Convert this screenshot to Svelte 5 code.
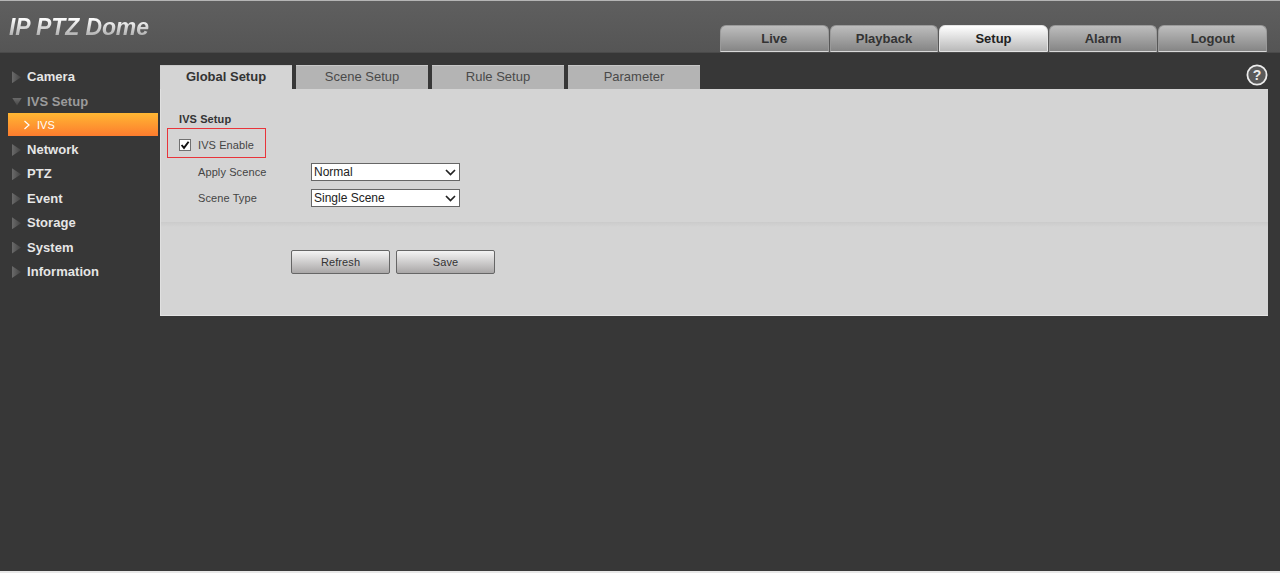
<script>
  const topTabs = ['Live', 'Playback', 'Setup', 'Alarm', 'Logout'];
  const subTabs = ['Global Setup', 'Scene Setup', 'Rule Setup', 'Parameter'];
  const menuAfter = ['Network', 'PTZ', 'Event', 'Storage', 'System', 'Information'];
</script>

<div class="page">
  <header class="header">
    <div class="logo">IP PTZ Dome</div>
    <nav class="top-tabs">
      {#each topTabs as tab}
        <a class="top-tab" class:active={tab === 'Setup'}>{tab}</a>
      {/each}
    </nav>
  </header>

  <div class="body">
    <aside class="side">
      <div class="menu-item"><span class="arrow"></span>Camera</div>
      <div class="menu-item open"><span class="arrow down"></span>IVS Setup</div>
      <div class="sub-item">
        <svg width="8" height="10" viewBox="0 0 8 10"><path d="M1.5 1 L6 5 L1.5 9" fill="none" stroke="#fff" stroke-width="1.2" /></svg>
        IVS
      </div>
      {#each menuAfter as item}
        <div class="menu-item"><span class="arrow"></span>{item}</div>
      {/each}
    </aside>

    <main class="main">
      <div class="sub-bar">
        <div class="sub-tabs">
          {#each subTabs as tab, i}
            <a class="sub-tab" class:active={i === 0}>{tab}</a>
          {/each}
        </div>
        <svg class="help" width="22" height="22" viewBox="0 0 22 22">
          <circle cx="11" cy="11" r="9.6" fill="#5a5a5a" stroke="#ececec" stroke-width="1.8" />
          <text x="11" y="16" text-anchor="middle" font-family="Liberation Sans" font-weight="700" font-size="14" fill="#ececec">?</text>
        </svg>
      </div>

      <section class="panel">
        <div class="form">
          <h3 class="title">IVS Setup</h3>
          <label class="enable">
            <span class="check">
              <input type="checkbox" checked />
              <svg width="12" height="12" viewBox="0 0 12 12"><path d="M2.6 6 L5 8.9 L9.6 2.8" fill="none" stroke="#111" stroke-width="1.9" /></svg>
            </span>
            <span>IVS Enable</span>
          </label>
          <div class="row">
            <span class="row-label">Apply Scence</span>
            <span class="select-wrap">
              <select><option>Normal</option></select>
              <svg width="11" height="7" viewBox="0 0 11 7"><path d="M1 1 L5.5 5.5 L10 1" fill="none" stroke="#222" stroke-width="1.7" /></svg>
            </span>
          </div>
          <div class="row">
            <span class="row-label">Scene Type</span>
            <span class="select-wrap">
              <select><option>Single Scene</option></select>
              <svg width="11" height="7" viewBox="0 0 11 7"><path d="M1 1 L5.5 5.5 L10 1" fill="none" stroke="#222" stroke-width="1.7" /></svg>
            </span>
          </div>
        </div>
        <div class="divider"></div>
        <div class="actions">
          <button>Refresh</button>
          <button>Save</button>
        </div>
      </section>
    </main>
  </div>
</div>

<style>
  :global(body) {
    margin: 0;
    background: #373737;
  }

  .page {
    height: 573px;
    box-sizing: border-box;
    border-top: 1px solid #b5b5b5;
    border-bottom: 2px solid #e8e8e8;
    background: #373737;
    font-family: "Liberation Sans", Arial, sans-serif;
    overflow: hidden;
  }

  .header {
    height: 51px;
    display: flex;
    justify-content: space-between;
    align-items: flex-end;
    background: linear-gradient(#5f5f5f, #555);
    border-bottom: 1px solid #4a4a4a;
    padding: 0 13px 0 9px;
  }

  .logo {
    align-self: flex-start;
    margin-top: 11px;
    font-size: 23px;
    line-height: 30px;
    font-weight: 700;
    font-style: italic;
    letter-spacing: -0.1px;
    background: linear-gradient(#fbfbfb 25%, #aeaeae 80%);
    -webkit-background-clip: text;
    background-clip: text;
    color: transparent;
  }

  .top-tabs {
    display: flex;
    gap: 1px;
  }

  .top-tab {
    width: 108.6px;
    height: 27px;
    line-height: 25px;
    box-sizing: border-box;
    text-align: center;
    font-size: 13px;
    font-weight: 700;
    color: #333;
    border: 1px solid #9a9a9a;
    border-bottom-color: #d8d8d8;
    border-radius: 6px 6px 0 0;
    background: linear-gradient(#bdbdbd, #858585);
  }

  .top-tab.active {
    background: linear-gradient(#fff, #b9b9b9);
    border-color: #e4e4e4;
    color: #222;
  }

  .body {
    display: flex;
  }

  .side {
    width: 160px;
    flex: none;
    padding-top: 12px;
  }

  .menu-item {
    height: 24.4px;
    line-height: 24px;
    display: flex;
    align-items: center;
    padding-left: 12px;
    font-size: 13px;
    font-weight: 700;
    letter-spacing: 0.05px;
    color: #e6e6e6;
  }

  .menu-item.open {
    color: #9b9b9b;
  }

  .arrow {
    width: 9px;
    height: 12px;
    margin-right: 6px;
    clip-path: polygon(0 0, 100% 50%, 0 100%);
    background: linear-gradient(to right, #6a6a6a, #444);
  }

  .arrow.down {
    width: 10px;
    height: 8px;
    margin-right: 5px;
    clip-path: polygon(0 0, 100% 0, 50% 100%);
    background: linear-gradient(#6a6a6a, #444);
  }

  .sub-item {
    margin: -1px 0 2px 8px;
    width: 150px;
    height: 23px;
    display: flex;
    align-items: center;
    gap: 6px;
    box-sizing: border-box;
    padding: 1px 0 0 15px;
    font-size: 11px;
    color: #fff;
    background: linear-gradient(#ffb733, #fd7c2e);
  }

  .main {
    flex: 1;
    min-width: 0;
    padding-right: 12px;
  }

  .sub-bar {
    height: 36px;
    display: flex;
    justify-content: space-between;
    align-items: flex-end;
  }

  .sub-tabs {
    display: flex;
    gap: 4px;
  }

  .sub-tab {
    width: 132px;
    height: 24px;
    line-height: 22px;
    box-sizing: border-box;
    text-align: center;
    font-size: 13px;
    color: #4a4a4a;
    background: #b4b4b4;
    border-top: 1px solid #c8c8c8;
  }

  .sub-tab.active {
    font-weight: 700;
    color: #333;
    background: #d4d4d4;
  }

  .help {
    margin: 0 0 3px 0;
  }

  .panel {
    height: 226px;
    background: #d4d4d4;
    border-bottom: 1px solid #e4e4e4;
    border-left: 1px solid #e0e0e0;
  }

  .form {
    padding: 23px 0 0 18px;
  }

  .title {
    margin: 0;
    font-size: 11px;
    line-height: 14px;
    font-weight: 700;
    letter-spacing: 0.1px;
    color: #333;
  }

  .enable {
    margin: 2px 0 1px -12px;
    width: 99px;
    height: 30px;
    box-sizing: border-box;
    border: 1px solid #e8343a;
    display: flex;
    align-items: center;
    gap: 7px;
    padding: 4px 0 0 11px;
    font-size: 11px;
    letter-spacing: 0.1px;
    color: #444;
  }

  .check {
    position: relative;
    width: 12px;
    height: 12px;
  }

  .check input {
    appearance: none;
    display: block;
    margin: 0;
    width: 12px;
    height: 12px;
    background: #fff;
    border: 1px solid #707070;
    box-sizing: border-box;
  }

  .check svg {
    position: absolute;
    left: 0;
    top: 0;
  }

  .row {
    height: 26px;
    display: flex;
    align-items: center;
    padding-left: 19px;
    font-size: 11px;
    letter-spacing: 0.1px;
    color: #444;
  }

  .row-label {
    width: 113px;
  }

  .select-wrap {
    position: relative;
    display: block;
    height: 18px;
  }

  .select-wrap svg {
    position: absolute;
    right: 4px;
    top: 6px;
    pointer-events: none;
  }

  select {
    appearance: none;
    display: block;
    width: 149px;
    height: 18px;
    padding: 0 0 0 2px;
    font-family: inherit;
    font-size: 12px;
    color: #222;
    background: #fff;
    border: 1px solid #666;
    border-radius: 0;
  }

  .divider {
    margin-top: 11px;
    height: 5px;
    background: linear-gradient(#cbcbcb, #d4d4d4);
  }

  .actions {
    margin-top: 23px;
    padding-left: 130px;
    display: flex;
    gap: 6px;
  }

  button {
    width: 99px;
    height: 24px;
    padding: 0;
    font-family: inherit;
    font-size: 11px;
    letter-spacing: 0.1px;
    color: #333;
    border: 1px solid #666;
    border-radius: 2px;
    background: linear-gradient(#f4f4f4, #a9a7a7);
  }
</style>
